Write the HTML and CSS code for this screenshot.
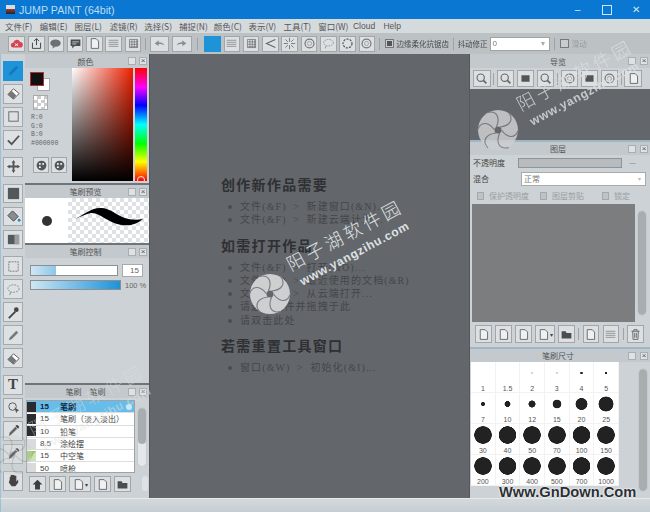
FILE: index.html
```html
<!DOCTYPE html>
<html lang="zh">
<head>
<meta charset="utf-8">
<title>JUMP PAINT</title>
<link rel="stylesheet" href="styles.css">
</head>
<body>
<svg class="defs" width="0" height="0">
  <defs>
    <symbol id="swirl" viewBox="-21 -21 42 42">
      <circle r="20" fill="#cdcfd1"/>
      <g fill="none" stroke="#777b7f" stroke-width="1.100">
        <path d="M2 -3C11 -4 17 -10 10 -18"/>
        <path d="M2 -3C11 -4 17 -10 10 -18" transform="rotate(60)"/>
        <path d="M2 -3C11 -4 17 -10 10 -18" transform="rotate(120)"/>
        <path d="M2 -3C11 -4 17 -10 10 -18" transform="rotate(180)"/>
        <path d="M2 -3C11 -4 17 -10 10 -18" transform="rotate(240)"/>
        <path d="M2 -3C11 -4 17 -10 10 -18" transform="rotate(300)"/>
      </g>
      <circle r="3.500" fill="#63676b"/>
    </symbol>
    <symbol id="page" viewBox="0 0 16 16"><path d="M4 2h6l3 3v9H4z" fill="#eef0f1" stroke="#555" stroke-width="1"/></symbol>
    <symbol id="folder" viewBox="0 0 16 16"><path d="M2 4h5l1 2h6v7H2z" fill="#4a4d50"/></symbol>
    <symbol id="mag" viewBox="0 0 16 16"><circle cx="7" cy="7" r="4.500" fill="none" stroke="#666" stroke-width="1.400"/><path d="M10 10l4 4" stroke="#666" stroke-width="2"/></symbol>
    <symbol id="frame" viewBox="0 0 16 16"><rect x="3" y="4" width="10" height="8" fill="#555"/></symbol>
    <symbol id="ring" viewBox="0 0 16 16"><circle cx="8" cy="8" r="5.500" fill="none" stroke="#777" stroke-width="1.500"/><circle cx="8" cy="8" r="2.500" fill="none" stroke="#999"/></symbol>
    <symbol id="lines" viewBox="0 0 16 16"><path d="M2 4h12M2 6.500h12M2 9h12M2 11.500h12" stroke="#888"/></symbol>
    <symbol id="grid" viewBox="0 0 16 16"><path d="M3 3h10v10H3zM3 6h10M3 9h10M3 12h10M6 3v10M9 3v10M12 3v10" fill="none" stroke="#666" stroke-width=".8"/></symbol>
    <symbol id="burst" viewBox="0 0 16 16"><path d="M8 1v5M8 10v5M1 8h5M10 8h5M3 3l3 3M10 10l3 3M13 3l-3 3M6 10l-3 3" stroke="#666"/></symbol>
    <symbol id="focus" viewBox="0 0 16 16"><path d="M14 3L3 8l11 5" fill="none" stroke="#666" stroke-width="1.400"/></symbol>
    <symbol id="dashring" viewBox="0 0 16 16"><circle cx="8" cy="8" r="5.500" fill="none" stroke="#555" stroke-width="1.500" stroke-dasharray="2.500 1.500"/></symbol>
    <symbol id="arrowl" viewBox="0 0 16 16"><path d="M2 8l5-4v2.500c4 0 6 1 7 4-2-2-4-2-7-2V11z" fill="#8a8e92"/></symbol>
    <symbol id="arrowr" viewBox="0 0 16 16"><path d="M14 8L9 4v2.500c-4 0-6 1-7 4 2-2 4-2 7-2V11z" fill="#8a8e92"/></symbol>
    <symbol id="chat" viewBox="0 0 16 16"><path d="M2 3h12v8H7l-3 3v-3H2z" fill="#4a4d50"/><path d="M4 6h8M4 8.500h5" stroke="#ddd"/></symbol>
    <symbol id="bubble" viewBox="0 0 16 16"><ellipse cx="8" cy="7.500" rx="6.500" ry="4.500" fill="#6d7073"/><path d="M5 11l-1 3 4-2z" fill="#6d7073"/></symbol>
    <symbol id="share" viewBox="0 0 16 16"><path d="M3 7v7h10V7M8 10V2M5 5l3-3 3 3" fill="none" stroke="#444" stroke-width="1.200"/></symbol>
    <symbol id="cloud" viewBox="0 0 16 16"><path d="M4 13a3 3 0 0 1 0-6 4.500 4.500 0 0 1 8.500-1A3.500 3.500 0 0 1 12 13z" fill="#d8424f"/><path d="M6 8l4 3M10 8l-4 3" stroke="#fff"/></symbol>
    <symbol id="upload" viewBox="0 0 16 16"><path d="M8 2l6 6h-3v6H5V8H2z" fill="#3c3f42"/></symbol>
    <symbol id="trash" viewBox="0 0 16 16"><path d="M3 4h10M6 4V2h4v2M4.500 4l.5 10h6l.5-10M7 6v6M9 6v6" fill="none" stroke="#555"/></symbol>
    <symbol id="pen" viewBox="0 0 16 16"><path d="M3 13l1-3 7-7 2 2-7 7z" fill="#1678b8"/></symbol>
    <symbol id="graypen" viewBox="0 0 16 16"><path d="M3 13l1-3 7-7 2 2-7 7z" fill="#77797c"/></symbol>
    <symbol id="eraser" viewBox="0 0 16 16"><path d="M2 9l6-6 6 5-6 6z" fill="#fff" stroke="#555"/><path d="M2 9l4-4 5 5-3 4z" fill="#777"/></symbol>
    <symbol id="square" viewBox="0 0 16 16"><rect x="3" y="3" width="10" height="10" fill="none" stroke="#666"/></symbol>
    <symbol id="check" viewBox="0 0 16 16"><path d="M2 9l4 4 8-9" fill="none" stroke="#555" stroke-width="2"/></symbol>
    <symbol id="move" viewBox="0 0 16 16"><path d="M8 1l2 3H9v3h3V6l3 2-3 2V9H9v3h1l-2 3-2-3h1V9H4v1L1 8l3-2v1h3V4H6z" fill="#555"/></symbol>
    <symbol id="fillsq" viewBox="0 0 16 16"><rect x="2" y="2" width="12" height="12" fill="#55585b"/></symbol>
    <symbol id="bucket" viewBox="0 0 16 16"><path d="M7 2l6 6-5 5-6-6z" fill="#8b8e91" stroke="#444"/><circle cx="14" cy="12" r="1.500" fill="#1e88c8"/></symbol>
    <symbol id="grad" viewBox="0 0 16 16"><rect x="2" y="3" width="12" height="10" fill="#56595c"/><rect x="9" y="3" width="5" height="10" fill="#9a9da0"/></symbol>
    <symbol id="dash" viewBox="0 0 16 16"><rect x="3" y="3" width="10" height="10" fill="none" stroke="#777" stroke-dasharray="2 1"/></symbol>
    <symbol id="lasso" viewBox="0 0 16 16"><ellipse cx="8" cy="7" rx="6" ry="4" fill="none" stroke="#888" stroke-dasharray="2 1"/><path d="M5 11l-1 3" stroke="#888"/></symbol>
    <symbol id="wand" viewBox="0 0 16 16"><path d="M3 14l7-7" stroke="#444" stroke-width="2"/><circle cx="11" cy="5" r="2.500" fill="#444"/></symbol>
    <symbol id="dropper" viewBox="0 0 16 16"><path d="M3 14l1-4 6-6 2 2-6 6z" fill="#666"/><path d="M10 3l2-1 2 2-1 2z" fill="#333"/></symbol>
    <symbol id="hand" viewBox="0 0 16 16"><path d="M4 7V4h1v3V2h2v5V2h2v5V3h2v6l2-2v3l-3 4H6L3 10z" fill="#444"/></symbol>
    <symbol id="select" viewBox="0 0 16 16"><circle cx="7" cy="7" r="4" fill="none" stroke="#555"/><path d="M9 8l5 3-2 1-1 2z" fill="#555"/></symbol>
    <symbol id="palette" viewBox="0 0 16 16"><circle cx="8" cy="8" r="6" fill="#55585b"/><circle cx="6" cy="6" r="1.200" fill="#fff"/><circle cx="10" cy="6" r="1.200" fill="#fff"/><circle cx="6" cy="10" r="1.200" fill="#fff"/></symbol>
  </defs>
</svg>

<div class="app">
  <header class="titlebar">
    <span class="appicon"></span>
    <span class="apptitle">JUMP PAINT (64bit)</span>
    <div class="winbtns"><span class="wb">–</span><span class="wb wb-max"></span><span class="wb">✕</span></div>
  </header>

  <nav class="menubar">
    <span>文件(F)</span><span>编辑(E)</span><span>图层(L)</span><span>滤镜(R)</span><span>选择(S)</span><span>捕捉(N)</span><span>颜色(C)</span><span>表示(V)</span><span>工具(T)</span><span>窗口(W)</span><span class="m-latin">Cloud</span><span class="m-latin">Help</span>
  </nav>

  <div class="toolbar">
    <button class="ib ib-first"><svg><use href="#cloud"/></svg></button>
    <button class="ib"><svg><use href="#share"/></svg></button>
    <button class="ib"><svg><use href="#bubble"/></svg></button>
    <button class="ib"><svg><use href="#chat"/></svg></button>
    <button class="ib"><svg><use href="#page"/></svg></button>
    <button class="ib"><svg><use href="#lines"/></svg></button>
    <button class="ib"><svg><use href="#grid"/></svg></button>
    <i class="sep"></i>
    <button class="ib ib-arrow"><svg><use href="#arrowl"/></svg></button>
    <button class="ib ib-arrow"><svg><use href="#arrowr"/></svg></button>
    <i class="sep sep-wide"></i>
    <button class="ib ib-active"></button>
    <button class="ib"><svg><use href="#lines"/></svg></button>
    <button class="ib"><svg><use href="#grid"/></svg></button>
    <button class="ib"><svg><use href="#focus"/></svg></button>
    <button class="ib"><svg><use href="#burst"/></svg></button>
    <button class="ib"><svg><use href="#ring"/></svg></button>
    <button class="ib"><svg><use href="#lasso"/></svg></button>
    <button class="ib"><svg><use href="#dashring"/></svg></button>
    <button class="ib"><svg><use href="#ring"/></svg></button>
    <i class="sep"></i>
    <span class="tcheck tcheck-on"></span>
    <span class="tlabel">边缘柔化抗锯齿</span>
    <i class="sep"></i>
    <span class="tlabel">抖动修正</span>
    <span class="tselect">0<b>▾</b></span>
    <i class="sep"></i>
    <span class="tcheck"></span>
    <span class="tlabel tlabel-dim">滑动</span>
  </div>

  <main class="workspace">
    <aside class="tools">
      <div class="toolgroup">
        <button class="tool tool-active"><svg><use href="#pen"/></svg></button>
        <button class="tool"><svg><use href="#eraser"/></svg></button>
        <button class="tool"><svg><use href="#square"/></svg></button>
        <button class="tool"><svg><use href="#check"/></svg></button>
      </div>
      <div class="toolgroup"><button class="tool"><svg><use href="#move"/></svg></button></div>
      <div class="toolgroup">
        <button class="tool"><svg><use href="#fillsq"/></svg></button>
        <button class="tool"><svg><use href="#bucket"/></svg></button>
        <button class="tool"><svg><use href="#grad"/></svg></button>
      </div>
      <div class="toolgroup">
        <button class="tool"><svg><use href="#dash"/></svg></button>
        <button class="tool"><svg><use href="#lasso"/></svg></button>
        <button class="tool"><svg><use href="#wand"/></svg></button>
        <button class="tool"><svg><use href="#graypen"/></svg></button>
        <button class="tool"><svg><use href="#eraser"/></svg></button>
      </div>
      <div class="toolgroup">
        <button class="tool tool-t">T</button>
        <button class="tool"><svg><use href="#select"/></svg></button>
        <button class="tool"><svg><use href="#dropper"/></svg></button>
        <button class="tool"><svg><use href="#dropper"/></svg></button>
        <button class="tool tool-hand"><svg><use href="#hand"/></svg></button>
      </div>
    </aside>

    <section class="leftpanels">
      <div class="panel p-color">
        <div class="phead"><span>颜色</span><i class="pb"></i><i class="pb pb-x">×</i></div>
        <div class="colorbody">
          <div class="colorinfo">
            <div class="swatches"><span class="sw-bg"></span><span class="sw-fg"></span></div>
            <div class="sw-trans"></div>
            <div class="rgb">R:0<br>G:0<br>B:0<br>#000000</div>
            <div class="palbtns">
              <button class="ib ib-small"><svg><use href="#palette"/></svg></button>
              <button class="ib ib-small"><svg><use href="#palette"/></svg></button>
            </div>
          </div>
          <div class="sv"></div>
          <div class="hue"><span class="huedot"></span></div>
        </div>
      </div>

      <div class="panel p-preview">
        <div class="phead"><span>笔刷预览</span><i class="pb"></i><i class="pb pb-x">×</i></div>
        <div class="previewbody">
          <div class="pv-dot"><span></span></div>
          <div class="pv-stroke">
            <svg viewBox="0 0 80 44" width="80" height="44"><path d="M6 21C15 18 23 9 34 10C47 11 53 25 75 21C67 28 57 29 46 25C35 20 29 14 23 15C17 16 11 20 6 21Z" fill="#000"/></svg>
          </div>
        </div>
      </div>

      <div class="panel p-control">
        <div class="phead"><span>笔刷控制</span><i class="pb"></i><i class="pb pb-x">×</i></div>
        <div class="ctlrow">
          <div class="slider"><span class="fill fill-size"></span></div>
          <span class="numbox">15</span>
        </div>
        <div class="ctlrow ctlrow-2">
          <div class="slider slider-op"><span class="fill fill-op"></span></div>
          <span class="pct">100 %</span>
        </div>
      </div>

      <div class="panel p-list">
        <div class="phead"><span>笔刷　笔刷</span><i class="pb"></i><i class="pb pb-x">×</i></div>
        <div class="listwrap">
          <ul class="brushes">
            <li class="on"><i class="th"></i><b>15</b><em>笔刷</em></li>
            <li><i class="th"></i><b>15</b><em>笔刷（淡入淡出）</em></li>
            <li><i class="th"></i><b>10</b><em>铅笔</em></li>
            <li><i class="th th-light"></i><b>8.5</b><em>涂绘摆</em></li>
            <li><i class="th th-green"></i><b>15</b><em>中空笔</em></li>
            <li><i class="th th-light"></i><b>50</b><em>喷枪</em></li>
          </ul>
          <div class="vscroll vscroll-list"><span></span></div>
        </div>
        <div class="listbtns">
          <button class="ib ib-list"><svg><use href="#upload"/></svg></button>
          <button class="ib ib-list"><svg><use href="#page"/></svg></button>
          <button class="ib ib-list ib-listw"><svg><use href="#page"/></svg><small>▾</small></button>
          <button class="ib ib-list"><svg><use href="#page"/></svg></button>
          <button class="ib ib-list"><svg><use href="#folder"/></svg></button>
          <span class="minibar"></span>
        </div>
      </div>
    </section>

    <section class="canvas">
      <h2>创作新作品需要</h2>
      <ul>
        <li>文件(&amp;F) &gt; 新建窗口(&amp;N)...</li>
        <li>文件(&amp;F) &gt; 新建云端计划...</li>
      </ul>
      <h2>如需打开作品</h2>
      <ul>
        <li>文件(&amp;F) &gt; 打开(&amp;O)...</li>
        <li>文件(&amp;F) &gt; 最近使用的文档(&amp;R)</li>
        <li>文件(&amp;F) &gt; 从云端打开...</li>
        <li>请选择文件并拖拽于此</li>
        <li>请双击此处</li>
      </ul>
      <h2>若需重置工具窗口</h2>
      <ul>
        <li>窗口(&amp;W) &gt; 初始化(&amp;I)...</li>
      </ul>
    </section>

    <section class="rightpanels">
      <div class="panel p-nav">
        <div class="phead"><span>导览</span><i class="pb"></i><i class="pb pb-x">×</i></div>
        <div class="navbar">
          <button class="ib"><svg><use href="#mag"/></svg></button>
          <i class="sep"></i>
          <button class="ib"><svg><use href="#mag"/></svg></button>
          <button class="ib"><svg><use href="#frame"/></svg></button>
          <button class="ib"><svg><use href="#mag"/></svg></button>
          <i class="sep"></i>
          <button class="ib"><svg><use href="#ring"/></svg></button>
          <button class="ib"><svg><use href="#frame"/></svg></button>
          <button class="ib"><svg><use href="#ring"/></svg></button>
          <i class="sep"></i>
          <button class="ib"><svg><use href="#page"/></svg></button>
        </div>
        <div class="navview"></div>
      </div>

      <div class="panel p-layer">
        <div class="phead"><span>图层</span><i class="pb"></i><i class="pb pb-x">×</i></div>
        <div class="lrow lrow-first"><label>不透明度</label><span class="opbar"></span><span class="opval">—</span></div>
        <div class="lrow"><label>混合</label><span class="blend">正常<b>▾</b></span></div>
        <div class="lchecks">
          <span><i></i>保护透明度</span><span><i></i>图层剪贴</span><span><i></i>锁定</span>
        </div>
        <div class="layerlist">
          <div class="layergray"></div>
          <div class="vscroll vscroll-layer"><span></span></div>
        </div>
        <div class="layerbtns">
          <button class="ib"><svg><use href="#page"/></svg></button>
          <button class="ib"><svg><use href="#page"/></svg></button>
          <button class="ib"><svg><use href="#page"/></svg></button>
          <button class="ib ib-wide"><svg><use href="#page"/></svg><small>▾</small></button>
          <button class="ib"><svg><use href="#folder"/></svg></button>
          <i class="sep"></i>
          <button class="ib"><svg><use href="#page"/></svg></button>
          <button class="ib"><svg><use href="#lines"/></svg></button>
          <i class="sep"></i>
          <button class="ib"><svg><use href="#trash"/></svg></button>
        </div>
      </div>

      <div class="panel p-size">
        <div class="phead"><span>笔刷尺寸</span><i class="pb"></i><i class="pb pb-x">×</i></div>
        <div class="sizewrap">
          <div class="sizegrid">
            <div class="sz"><i class="d1"></i><span>1</span></div>
            <div class="sz"><i class="d1"></i><span>1.5</span></div>
            <div class="sz"><i class="d2"></i><span>2</span></div>
            <div class="sz"><i class="d2"></i><span>3</span></div>
            <div class="sz"><i class="d3"></i><span>4</span></div>
            <div class="sz"><i class="d3"></i><span>5</span></div>
            <div class="sz"><i class="d4"></i><span>7</span></div>
            <div class="sz"><i class="d5"></i><span>10</span></div>
            <div class="sz"><i class="d6"></i><span>12</span></div>
            <div class="sz"><i class="d7"></i><span>15</span></div>
            <div class="sz"><i class="d8"></i><span>20</span></div>
            <div class="sz"><i class="d9"></i><span>25</span></div>
            <div class="sz"><i class="d10"></i><span>30</span></div>
            <div class="sz"><i class="d10"></i><span>40</span></div>
            <div class="sz"><i class="d10"></i><span>50</span></div>
            <div class="sz"><i class="d10"></i><span>70</span></div>
            <div class="sz"><i class="d10"></i><span>100</span></div>
            <div class="sz"><i class="d10"></i><span>150</span></div>
            <div class="sz"><i class="d10"></i><span>200</span></div>
            <div class="sz"><i class="d10"></i><span>300</span></div>
            <div class="sz"><i class="d10"></i><span>400</span></div>
            <div class="sz"><i class="d10"></i><span>500</span></div>
            <div class="sz"><i class="d10"></i><span>700</span></div>
            <div class="sz"><i class="d10"></i><span>1000</span></div>
          </div>
          <div class="vscroll vscroll-size"><span></span></div>
        </div>
      </div>
    </section>
  </main>

  <footer class="statusbar"></footer>

  <div class="wm wm-center"><span class="wm-cn">阳子湖软件园</span><span class="wm-en">www.yangzihu.com</span></div>
  <svg class="wm-logo wm-logo-center"><use href="#swirl"/></svg>
  <div class="wm wm-top"><span class="wm-cn">阳子湖软件园</span><span class="wm-en">www.yangzihu.com</span></div>
  <svg class="wm-logo wm-logo-top"><use href="#swirl"/></svg>
  <div class="wm wm-low"><span class="wm-cn">阳子湖软件园</span><span class="wm-en">www.yangzihu.com</span></div>
  <svg class="wm-logo wm-logo-low"><use href="#swirl"/></svg>
  <div class="gndown">Www.GnDown.Com</div>
</div>
</body>
</html>
```
FILE: styles.css
```css
* { box-sizing: border-box; }
html, body { margin: 0; padding: 0; }
body { width: 650px; height: 512px; overflow: hidden; background: #d0d5d8; font-family: "Noto Sans CJK SC", "Liberation Sans", sans-serif; }
.defs { position: absolute; }
.app { position: relative; width: 650px; height: 512px; display: flex; flex-direction: column; overflow: hidden; filter: blur(0.35px); color: #444; }

.titlebar { height: 19px; background: #0a78d2; color: #bcdcf5; display: flex; align-items: center; padding-left: 6px; font: 10.700px "Liberation Sans", sans-serif; flex: none; }
.appicon { width: 9px; height: 9px; background: linear-gradient(#d8dde0 40%, #a04040 40%, #222); margin-right: 4px; }
.winbtns { margin-left: auto; display: flex; color: #cfe6f8; }
.wb { width: 29px; text-align: center; font-size: 10px; display: flex; justify-content: center; align-items: center; height: 19px; }
.wb-max::before { content: ""; width: 8px; height: 8px; border: 1px solid #cfe6f8; }

.menubar { height: 14px; flex: none; background: #d5dadd; display: flex; gap: 8px; padding-left: 5px; font-size: 8.500px; line-height: 14px; color: #555; white-space: nowrap; }
.menubar span { width: 26.800px; }
.menubar .m-latin { width: 22.500px; font: 8.500px/14px "Liberation Sans", sans-serif; }

.toolbar { height: 21px; flex: none; background: #bcc1c4; display: flex; align-items: center; padding-left: 8px; gap: 2.800px; font-size: 7.500px; }
.ib { width: 16.500px; height: 16px; padding: 0; border: 1px solid #a2a6a9; background: #dde0e2; display: inline-flex; align-items: center; justify-content: center; flex: none; color: #444; }
.ib svg { width: 13px; height: 13px; }
.ib-first { margin-right: 1px; }
.ib-arrow { width: 19.500px; }
.ib-active { background: #1e93d8; border-color: #1e93d8; }
.sep { width: 1px; height: 12px; background: #9ea3a6; margin: 0 1px; flex: none; }
.sep-wide { margin: 0 3px; }
.tcheck { width: 9px; height: 9px; border: 1px solid #777; background: #c8cccf; flex: none; margin-left: 1px; position: relative; }
.tcheck-on::after { content: ""; position: absolute; inset: 1px; background: #555; }
.tlabel { white-space: nowrap; color: #4a4d50; }
.tlabel-dim { color: #9a9ea1; }
.tselect { width: 60px; height: 14px; flex: none; background: #fff; border: 1px solid #9ea3a6; font: 8px/12px "Liberation Sans", sans-serif; padding-left: 1px; display: flex; justify-content: space-between; padding-right: 4px; color: #777; }
.tselect b { font-weight: 400; color: #aaa; }

.workspace { flex: 1; display: flex; min-height: 0; }
.tools { width: 25px; flex: none; background: #ccd2d5; padding: 7px 0 0 2px; border-left: 1px solid #9dc0d6; display: flex; flex-direction: column; gap: 7px; }
.toolgroup { display: flex; flex-direction: column; gap: 3.200px; }
.tool { width: 20px; height: 19.800px; padding: 0; border: 1px solid #a4a9ac; background: #dee1e3; display: flex; align-items: center; justify-content: center; flex: none; }
.tool svg { width: 15px; height: 15px; }
.tool-active { background: #1e93d8; border-color: #1e93d8; }
.tool-t { font: bold 15px "Liberation Serif", serif; color: #444; }
.tool-hand { margin-top: 4px; }

.leftpanels { width: 124px; flex: none; display: flex; flex-direction: column; background: #ccd2d5; }
.panel { background: #ccd2d5; display: flex; flex-direction: column; flex: none; }
.phead { height: 13px; flex: none; background: #c3c9cc; display: flex; align-items: center; gap: 3px; font-size: 8px; color: #555; padding: 0 2px 0 21px; }
.phead span { flex: 1; text-align: center; white-space: nowrap; }
.pb { width: 8px; height: 8px; flex: none; background: #dfe2e4; border: 1px solid #a9aeb1; font: 8px/6px "Liberation Sans", sans-serif; text-align: center; color: #555; }

.p-color { height: 129px; }
.p-color .phead { height: 14px; }
.colorbody { flex: 1; display: flex; padding: 0 1px 0 5px; min-height: 0; }
.colorinfo { width: 42px; flex: none; padding-top: 4px; }
.swatches { position: relative; height: 20px; width: 22px; }
.sw-fg { position: absolute; left: 0; top: 0; width: 14px; height: 14px; background: #111; border: 1px solid #a33; }
.sw-bg { position: absolute; left: 7px; top: 6px; width: 13px; height: 13px; background: #fff; border: 1px solid #aaa; }
.sw-trans { margin: 3px 0 0 3px; width: 15px; height: 15px; border: 1px solid #aaa; background: conic-gradient(#ccc 25%, #fff 0 50%, #ccc 0 75%, #fff 0) 0 0/7px 7px; }
.rgb { margin: 4px 0 0 1px; font: 6.500px/8.500px "Liberation Mono", monospace; color: #666; }
.palbtns { display: flex; gap: 2px; margin: 9px 0 0 3px; }
.ib-small { width: 16px; height: 16px; }
.sv { width: 61px; height: 113px; flex: none; background: linear-gradient(to top, #000, transparent), linear-gradient(to right, #fff, #f02000); }
.hue { width: 12px; height: 113px; flex: none; margin-left: 2px; position: relative; overflow: hidden; background: linear-gradient(#f00, #f0f 17%, #00f 33%, #0ff 50%, #0f0 67%, #ff0 83%, #f00); }
.huedot { position: absolute; left: 2px; bottom: -3px; width: 8px; height: 8px; border: 1.500px solid #eee; border-radius: 50%; }

.p-preview { height: 60px; border-top: 2px solid #6f7478; }
.previewbody { flex: 1; display: flex; }
.pv-dot { width: 43px; background: #fff; display: flex; align-items: center; justify-content: center; flex: none; }
.pv-dot span { width: 10px; height: 10px; border-radius: 50%; background: #333; }
.pv-stroke { flex: 1; background: conic-gradient(#dfe2e4 25%, #fff 0 50%, #dfe2e4 0 75%, #fff 0) 0 0/8px 8px; }
.pv-stroke svg { display: block; }

.p-control { height: 140px; border-top: 2px solid #6f7478; }
.ctlrow { display: flex; align-items: center; gap: 4px; padding: 6px 0 0 5px; }
.ctlrow-2 { padding-top: 3px; }
.slider { width: 88px; height: 11px; background: #fff; border: 1px solid #8a8f92; }
.slider-op { width: 91px; height: 10px; }
.fill { display: block; height: 100%; }
.fill-size { width: 29%; background: linear-gradient(to right, #cfe6f4, #8cc6e8); }
.fill-op { width: 100%; background: linear-gradient(to right, #cfe6f4, #1e93d8); }
.numbox { width: 21px; height: 13px; border: 1px solid #aaa; background: #fff; font: 8px/11px "Liberation Sans", sans-serif; text-align: right; padding-right: 3px; color: #666; }
.pct { font: 7.500px "Liberation Sans", sans-serif; color: #666; white-space: nowrap; }

.p-list { flex: 1; min-height: 0; border-top: 2px solid #6f7478; }
.listwrap { height: 75px; display: flex; padding: 2px 0 0 1px; flex: none; }
.brushes { list-style: none; margin: 0; padding: 0; width: 109px; height: 73px; flex: none; background: #fff; overflow: hidden; border: 1px solid #9ea3a6; }
.brushes li { height: 12.300px; display: flex; align-items: center; font-size: 8px; border-bottom: 1px solid #ddd; color: #444; white-space: nowrap; position: relative; }
.brushes li.on { background: #66bdea; color: #123; font-weight: 700; }
.brushes li.on::after { content: ""; position: absolute; right: 2px; top: 3px; width: 6px; height: 6px; border-radius: 50%; background: #cfe6f4; }
.th { width: 9px; height: 10px; background: #2a2d30; flex: none; margin-right: 4px; }
.th-light { background: #d8dadc; }
.th-green { background: linear-gradient(135deg, #9c6 50%, #cde2bc 50%); }
.brushes b { font: 8px "Liberation Sans", sans-serif; width: 20px; flex: none; }
.brushes .on b { font-weight: 700; }
.brushes em { font-style: normal; }
.vscroll { width: 10px; background: #e4e7e9; border-radius: 5px; border: 1px solid #c6cacd; overflow: hidden; flex: none; }
.vscroll span { display: block; background: #a8adb0; border-radius: 4px; }
.vscroll-list { margin: 7px 0 0 2px; height: 60px; }
.vscroll-list span { height: 36px; }
.listbtns { display: flex; gap: 3px; padding: 3px 0 0 4px; }
.ib-list { width: 17px; height: 16px; }
.ib-listw { width: 22px; }
.ib small { font-size: 6px; }
.minibar { width: 6px; height: 15px; margin-left: 8px; background: #dfe2e4; border-radius: 3px; }

.canvas { flex: 1; min-width: 0; background: #63676b; padding: 124px 0 0 71px; color: #2c2e31; border-left: 1px solid #55595c; border-right: 1px solid #54585b; }
.canvas h2 { margin: 0; font: 700 14px/16px "Liberation Serif", "Noto Sans CJK SC", serif; letter-spacing: 1.300px; color: #2e3033; }
.canvas ul { list-style: none; margin: 6px 0 12px; padding: 0 0 0 7px; }
.canvas li { font: 10px/13.300px "Liberation Serif", "Noto Sans CJK SC", serif; letter-spacing: 1.100px; word-spacing: 3px; color: #43464a; position: relative; padding-left: 12px; white-space: nowrap; }
.canvas li::before { content: ""; position: absolute; left: 0; top: 5px; width: 4px; height: 4px; border-radius: 50%; background: #4a4d50; }

.rightpanels { width: 180px; flex: none; display: flex; flex-direction: column; background: #ccd2d5; }
.rightpanels .phead { gap: 4px; padding-left: 22px; }
.p-nav { height: 86px; }
.p-nav .phead { height: 14px; }
.navbar { height: 21px; background: #ccd2d5; display: flex; align-items: center; gap: 2.600px; padding-left: 3px; flex: none; }
.navbar .ib { height: 17px; width: 17.500px; }
.navbar .sep { margin: 0; }
.navview { flex: 1; background: #63676b; }

.p-layer { height: 207px; border-top: 2px solid #9fb6c5; }
.lrow { display: flex; align-items: center; padding-left: 3px; font-size: 8px; height: 15px; margin-top: 1px; color: #444; }
.lrow-first { margin-top: 0; }
.lrow label { width: 45px; flex: none; }
.opbar { width: 104px; height: 10px; background: #b8bcbe; border: 1px solid #8f9498; }
.opval { margin-left: 7px; color: #888; }
.blend { width: 125px; height: 14px; background: #fff; border: 1px solid #aaa; margin-left: 3px; padding: 0 4px 0 2px; display: flex; justify-content: space-between; line-height: 12px; color: #777; }
.blend b { color: #bbb; font-weight: 400; font-size: 6px; }
.lchecks { display: flex; gap: 11px; padding: 3px 0 0 7px; font-size: 8px; color: #9a9ea1; height: 16px; align-items: center; }
.lchecks span { display: flex; align-items: center; gap: 5px; white-space: nowrap; }
.lchecks span:nth-child(3) { margin-left: 7px; }
.lchecks i { width: 7px; height: 8px; border: 1px solid #a4a9ac; background: #bfc3c6; }
.layerlist { height: 118px; display: flex; padding-left: 2px; flex: none; margin-top: 2px; }
.layergray { width: 163px; background: #7b7d7f; }
.vscroll-layer { margin: 6px 0 0 2px; height: 106px; }
.vscroll-layer span { height: 104px; }
.layerbtns { display: flex; gap: 3.500px; padding: 3px 0 0 5px; align-items: center; }
.layerbtns .ib { height: 18px; width: 16.500px; }
.layerbtns .ib-wide { width: 19.500px; }
.layerbtns .sep { margin: 0; }

.p-size { flex: 1; min-height: 0; border-top: 2px solid #9fb6c5; }
.sizewrap { display: flex; padding-left: 1px; flex: 1; min-height: 0; }
.sizegrid { width: 148px; height: 124px; background: #fff; display: grid; grid-template-columns: repeat(6, 1fr); grid-template-rows: repeat(4, 31px); flex: none; }
.sz { display: flex; flex-direction: column; align-items: center; border-right: 1px solid #f2f2f2; border-bottom: 1px solid #f2f2f2; font: 7px/9px "Liberation Sans", sans-serif; color: #555; }
.sz i { height: 22px; flex: none; display: block; background: radial-gradient(circle, #222 calc(var(--r) - .5px), transparent var(--r)); width: 100%; }
.d1 { --r: .4px; } .d2 { --r: .8px; } .d3 { --r: 1.500px; } .d4 { --r: 2.300px; } .d5 { --r: 3.200px; }
.d6 { --r: 3.800px; } .d7 { --r: 4.600px; } .d8 { --r: 6.200px; } .d9 { --r: 7.700px; } .d10 { --r: 9px; }
.vscroll-size { margin: 6px 0 0 19px; height: 124px; }
.vscroll-size span { height: 122px; }

.statusbar { height: 14px; flex: none; background: linear-gradient(#d3d8db, #c6ced4); border-top: 1px solid #e6e9ea; border-left: 1px solid #9dc0d6; }

.wm { position: absolute; display: flex; flex-direction: column; align-items: center; gap: 4px; transform: rotate(-28deg); color: #dfe1e3; pointer-events: none; white-space: nowrap; }
.wm-cn { font: 300 18px/22px "Noto Sans CJK SC", sans-serif; letter-spacing: 3.500px; }
.wm-en { font: 700 12px/14px "Liberation Sans", sans-serif; letter-spacing: .7px; }
.wm-center { left: 284px; top: 222px; }
.wm-top { left: 514px; top: 62px; opacity: .8; }
.wm-low { left: 26px; top: 387px; opacity: .45; }
.wm-logo { position: absolute; width: 42px; height: 42px; pointer-events: none; }
.wm-logo-center { left: 249px; top: 273px; }
.wm-logo-top { left: 477px; top: 109px; opacity: .85; }
.wm-logo-low { left: -9px; top: 434px; opacity: .3; }
.gndown { position: absolute; left: 499px; top: 485px; font: 700 14.700px/15px "Liberation Sans", sans-serif; color: #2c3034; text-shadow: 0 0 2px #fff, 0 0 2px #fff; white-space: nowrap; }
```
